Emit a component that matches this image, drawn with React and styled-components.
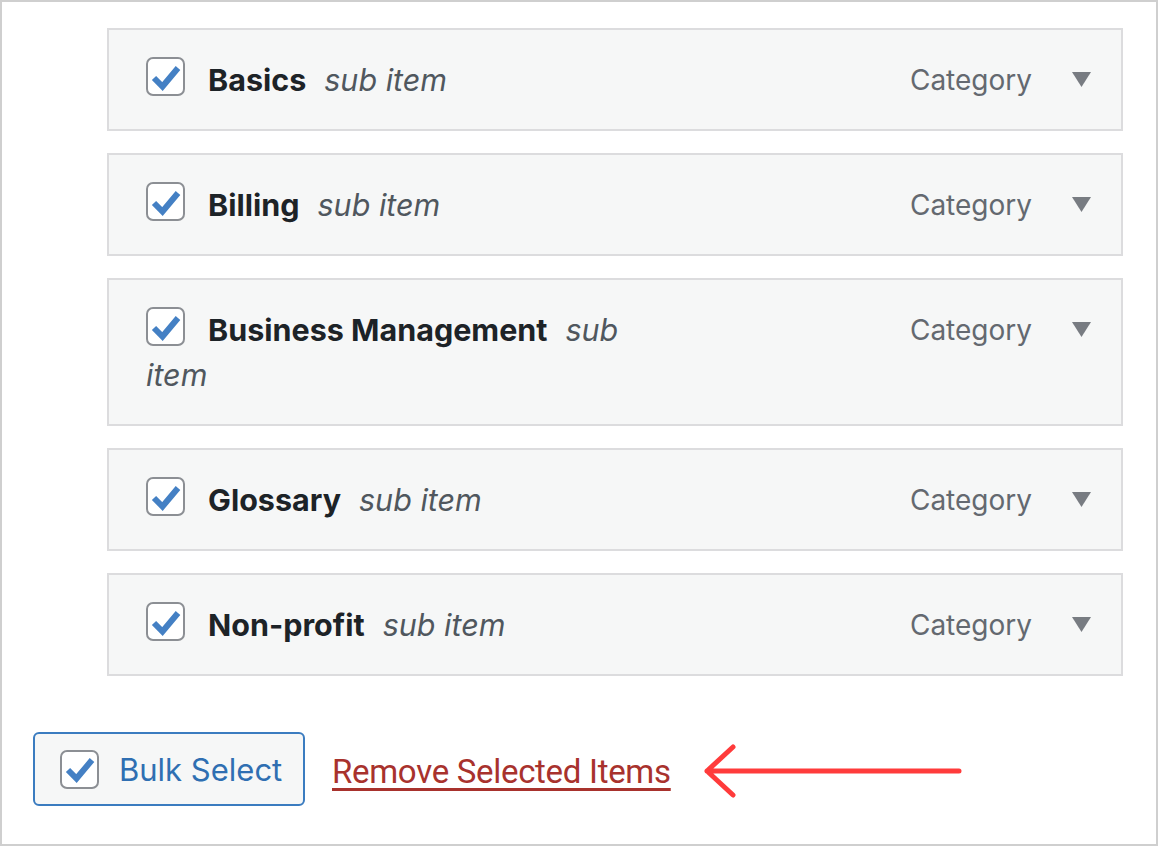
import React from "react";
import styled, { createGlobalStyle } from "styled-components";

const GlobalStyle = createGlobalStyle`
	html, body {
		margin: 0;
		padding: 0;
		background: #fff;
	}
	* {
		box-sizing: border-box;
	}
`;

const Frame = styled.div`
	width: 1158px;
	height: 846px;
	border: 2px solid #cfcfcf;
	background: #fff;
	padding: 26px 33px 0 31px;
	font-family: Inter, "Noto Sans", sans-serif;
	display: flex;
	flex-direction: column;
`;

const List = styled.div`
	margin-left: 74px;
	width: 1016px;
	display: flex;
	flex-direction: column;
	gap: 22px;
`;

const Item = styled.div`
	display: flex;
	align-items: flex-start;
	justify-content: space-between;
	background: #f6f7f7;
	border: 2px solid #dcdcde;
	padding: 27px 30px 27px 37px;
`;

const Title = styled.div`
	width: 500px;
	line-height: 45px;
	font-size: 30.5px;
`;

const Name = styled.strong`
	font-weight: 700;
	color: #1d2327;
	margin-right: 18px;
`;

const Sub = styled.em`
	font-style: italic;
	color: #50575e;
`;

const Box = styled.span`
	display: inline-flex;
	vertical-align: top;
	width: 39px;
	height: 39px;
	border: 2px solid #8c8f94;
	border-radius: 7px;
	background: #fff;
	margin-right: ${(p) => p.gap || 23}px;
	align-items: center;
	justify-content: center;
`;

const Meta = styled.div`
	display: flex;
	align-items: center;
	gap: 40px;
	height: 45px;
	font-size: 28px;
	color: #646970;
`;

const Footer = styled.div`
	margin-top: 56px;
	display: flex;
	align-items: center;
`;

const BulkButton = styled.div`
	display: flex;
	align-items: center;
	width: 272px;
	height: 74px;
	padding-left: 25px;
	border: 2px solid #3b7cc0;
	border-radius: 6px;
	background: #f6f7f7;
	color: #2f6fb2;
	font-size: 31px;
`;

const RemoveLink = styled.a`
	margin-left: 27px;
	margin-top: 5px;
	font-family: Roboto, "Liberation Sans", sans-serif;
	font-size: 33px;
	color: #a8322d;
	text-decoration: underline;
	text-decoration-thickness: 3px;
	text-underline-offset: 5px;
	letter-spacing: -0.3px;
`;

const Check = () => (
	<svg width="30" height="26" viewBox="0 0 30 26" style={{ marginTop: 2 }}>
		<path
			d="M3 13 L11.5 21.5 L27 3"
			fill="none"
			stroke="#4480c4"
			strokeWidth="6"
			strokeLinejoin="miter"
		/>
	</svg>
);

const Caret = () => (
	<svg width="19" height="15" viewBox="0 0 19 15">
		<path d="M0 0 H19 L9.5 15 Z" fill="#787c82" />
	</svg>
);

const Arrow = () => (
	<svg width="262" height="56" viewBox="0 0 262 56" style={{ marginLeft: 32, marginTop: 4 }}>
		<path
			d="M4 28 H256 M4 28 L30 4 M4 28 L30 52"
			fill="none"
			stroke="#ff3b3b"
			strokeWidth="5"
			strokeLinecap="round"
		/>
	</svg>
);

const items = ["Basics", "Billing", "Business Management", "Glossary", "Non-profit"];

export default function App() {
	return (
		<>
			<GlobalStyle />
			<Frame>
				<List>
					{items.map((name) => (
						<Item key={name}>
							<Title>
								<Box>
									<Check />
								</Box>
								<Name>{name}</Name>
								<Sub>sub item</Sub>
							</Title>
							<Meta>
								<span>Category</span>
								<Caret />
							</Meta>
						</Item>
					))}
				</List>
				<Footer>
					<BulkButton>
						<Box gap={20}>
							<Check />
						</Box>
						Bulk Select
					</BulkButton>
					<RemoveLink href="#">Remove Selected Items</RemoveLink>
					<Arrow />
				</Footer>
			</Frame>
		</>
	);
}
